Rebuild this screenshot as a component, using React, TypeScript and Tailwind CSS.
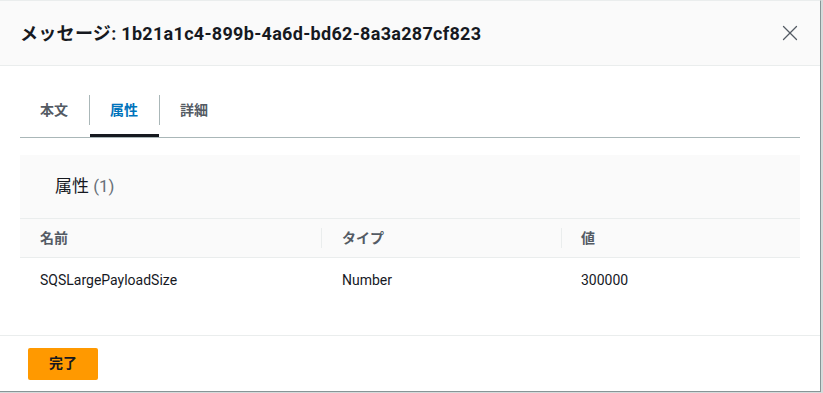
import { X } from "lucide-react";

export default function App() {
  const tabs = ["本文", "属性", "詳細"];
  const rows = [{ name: "SQSLargePayloadSize", type: "Number", value: "300000" }];

  return (
    <div
      className="w-[823px] h-[393px] bg-[#d5dbdb] overflow-hidden"
      style={{ fontFamily: '"Roboto", "Noto Sans CJK JP", sans-serif' }}
    >
      <div className="w-[821px] h-[392px] bg-white border-t border-[#eaeded] border-r border-b border-r-[#879596] border-b-[#879596] flex flex-col">
        {/* Header */}
        <div className="h-[65px] bg-[#fafafa] border-b border-[#eaeded] flex items-center justify-between pl-5 pr-[17px] shrink-0">
          <h1 className="text-[18px] font-bold text-[#16191f] tracking-[0.3px]">
            メッセージ: 1b21a1c4-899b-4a6d-bd62-8a3a287cf823
          </h1>
          <X className="w-[26px] h-[26px] text-[#545b64]" strokeWidth={1.2} />
        </div>

        {/* Body */}
        <div className="flex-1 px-5 pt-[29px]">
          <div className="flex border-b border-[#aab7b8] h-[43px]">
            {tabs.map((t, i) => (
              <div key={t} className="flex items-start">
                {i > 0 && <div className="w-px h-[30px] bg-[#aab7b8]" />}
                <div
                  className={
                    "h-full flex flex-col pl-5 pr-[21px] " +
                    (i === 1 ? "border-b-[3px] border-[#16191f]" : "")
                  }
                >
                  <div
                    className={
                      "h-[30px] flex items-center text-[14px] font-bold " +
                      (i === 1 ? "text-[#0073bb]" : "text-[#545b64]")
                    }
                  >
                    {t}
                  </div>
                </div>
              </div>
            ))}
          </div>

          <div className="mt-[17px] bg-[#fafafa]">
            <div className="h-[64px] flex items-center pl-[35px] border-b border-[#eaeded]">
              <span className="text-[17px] text-[#16191f]">
                属性 <span className="text-[#687078]">(1)</span>
              </span>
            </div>
            <div className="grid grid-cols-[301px_240px_1fr] h-[39px] items-center border-b border-[#eaeded] text-[14px] font-bold text-[#545b64]">
              <div className="pl-5">名前</div>
              <div className="border-l border-[#eaeded] pl-5 h-[20px] flex items-center">タイプ</div>
              <div className="border-l border-[#eaeded] pl-[19px] h-[20px] flex items-center">値</div>
            </div>
            {rows.map((r) => (
              <div
                key={r.name}
                className="grid grid-cols-[301px_240px_1fr] h-[44px] items-center bg-white text-[14px] text-[#16191f]"
              >
                <div className="pl-5">{r.name}</div>
                <div className="pl-[21px]">{r.type}</div>
                <div className="pl-5">{r.value}</div>
              </div>
            ))}
          </div>
        </div>

        {/* Footer */}
        <div className="h-[56px] border-t border-[#eaeded] flex items-center pl-7 shrink-0">
          <button className="w-[70px] h-[32px] bg-[#ff9900] rounded-[2px] text-[14px] font-bold text-[#16191f]">
            完了
          </button>
        </div>
      </div>
    </div>
  );
}
